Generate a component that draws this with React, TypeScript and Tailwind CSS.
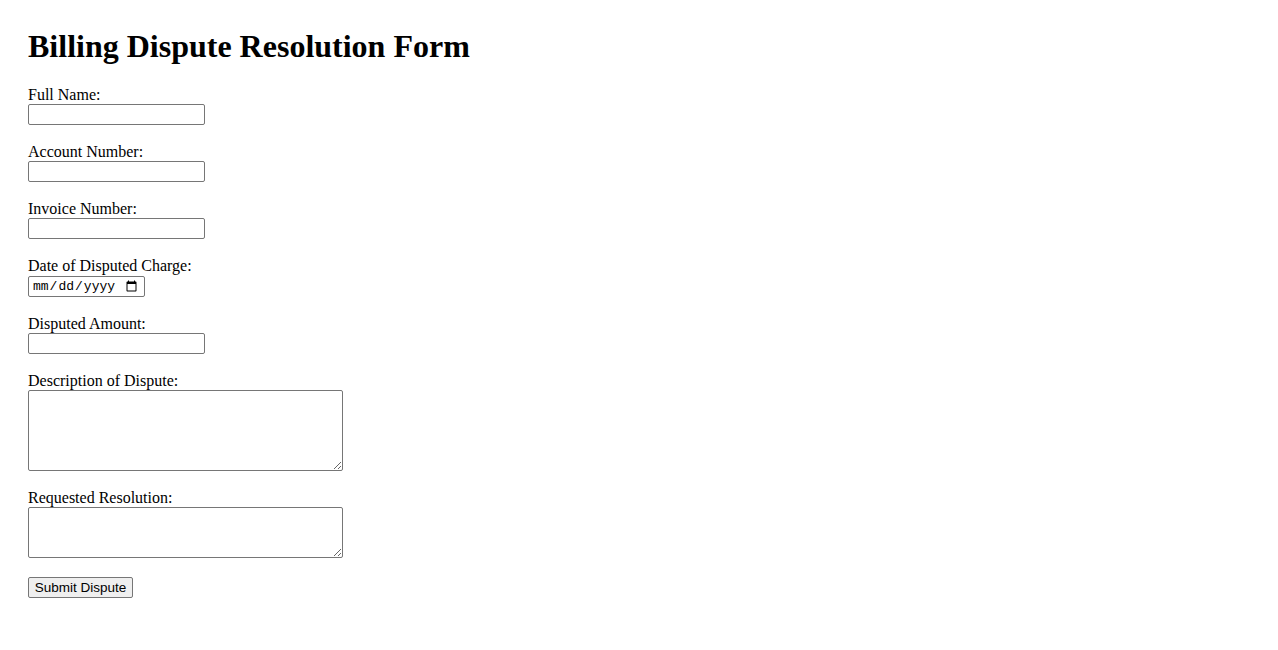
import React from 'react';

const serif = "font-['Liberation_Serif','Times_New_Roman',serif]";

const Field = ({ label, children, last }: { label: string; children: React.ReactNode; last?: boolean }) => (
  <div className={`flex flex-col items-start ${last ? 'mb-[19px]' : 'mb-[17px]'}`}>
    <label className={`${serif} text-[16px] leading-[19px] text-black`}>{label}</label>
    {children}
  </div>
);

const inputCls =
  'block w-[177px] h-[21px] border border-[#767676] rounded-[2px] bg-white px-[2px] text-[13px] font-[Arial,sans-serif] outline-none';

const areaCls =
  'block w-[315px] border border-[#767676] rounded-[2px] bg-white px-[2px] text-[13px] font-[Arial,sans-serif] outline-none';

const App = () => {
  return (
    <div className="min-h-screen bg-white px-[28px] pt-[28px] text-black">
      <h1 className={`${serif} text-[32px] leading-[37px] font-bold mb-[20px]`}>Billing Dispute Resolution Form</h1>

      <form onSubmit={e => e.preventDefault()}>
        <Field label="Full Name:">
          <input type="text" className={inputCls} />
        </Field>

        <Field label="Account Number:">
          <input type="text" className={inputCls} />
        </Field>

        <Field label="Invoice Number:">
          <input type="text" className={inputCls} />
        </Field>

        <Field label="Date of Disputed Charge:">
          <input
            type="date"
            className="block mt-px w-[117px] h-[21px] border border-[#767676] rounded-[2px] bg-white pl-[3px] pr-[4px] text-[13px] font-['Liberation_Mono',monospace] outline-none"
          />
        </Field>

        <Field label="Disputed Amount:">
          <input type="text" className={inputCls} />
        </Field>

        <Field label="Description of Dispute:">
          <textarea className={`${areaCls} h-[81px]`} />
        </Field>

        <Field label="Requested Resolution:" last>
          <textarea className={`${areaCls} h-[51px]`} />
        </Field>

        <button
          type="submit"
          className="block h-[21px] w-[105px] border border-[#767676] rounded-[2px] bg-[#efefef] text-center text-[13.5px] leading-[19px] font-['Liberation_Sans',Arial,sans-serif] text-black"
        >
          Submit Dispute
        </button>
      </form>
    </div>
  );
};

export default App;
